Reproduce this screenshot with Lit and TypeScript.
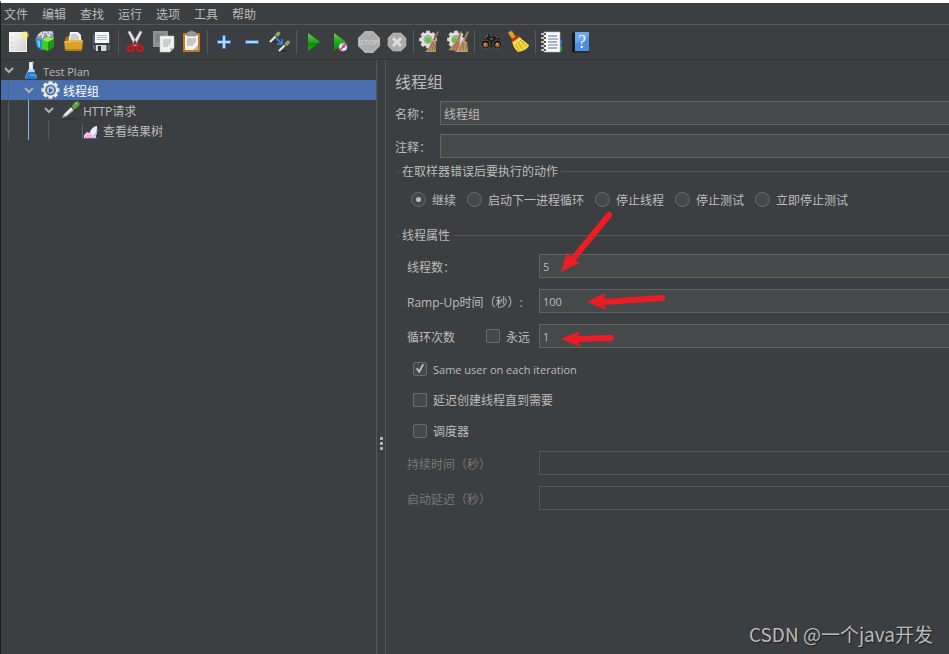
import { LitElement, html, css, svg, nothing, type TemplateResult } from "lit";
import { customElement, property } from "lit/decorators.js";
import { classMap } from "lit/directives/class-map.js";

const cog = (cx: number, cy: number, r: number) => {
  const n = 8;
  const pts: string[] = [];
  for (let i = 0; i < n; i++) {
    const a = (i / n) * Math.PI * 2 - Math.PI / 2;
    const at = (da: number, k: number) =>
      `${(cx + Math.cos(a + da) * r * k).toFixed(2)},${(cy + Math.sin(a + da) * r * k).toFixed(2)}`;
    pts.push(at(-0.26, 0.8), at(-0.2, 1), at(0.2, 1), at(0.26, 0.8));
  }
  return pts.join(" ");
};

const ICONS: Record<string, TemplateResult> = {
  new: svg`
    <defs><linearGradient id="g" x2="1" y2="1"><stop stop-color="#fdfdfd"/><stop offset="1" stop-color="#cfcfcf"/></linearGradient>
    <radialGradient id="s"><stop stop-color="#fffde0"/><stop offset=".4" stop-color="#f4ec70"/><stop offset="1" stop-color="#f4ec70" stop-opacity="0"/></radialGradient></defs>
    <rect x="3.5" y="2.5" width="17" height="19" fill="url(#g)" stroke="#f4f4f4"/>
    <path d="M6 7v1M6 12v1M6 17v1" stroke="#aaa"/>
    <circle cx="19" cy="5" r="4.500" fill="url(#s)"/>`,
  templates: svg`
    <path d="M2 8l3-5 5-2 9 0 1 8-8 4-9-2z" fill="#8d9aa0"/>
    <path d="M4 6l4-4M8 8l2-6 4 1M14 7l2-5 3 2M6 4l4 2M12 4l5 2" stroke="#dfe8ec" stroke-width="1.200" fill="none"/>
    <path d="M1 8l8 2v11l-6-4z" fill="#1d8fd8"/><path d="M3 10l3 1v7l-2-2z" fill="#7cc8f4"/>
    <path d="M8 10l6-3 6 2-6 3z" fill="#8cf04a"/><path d="M8 10l6 2v9l-6-2z" fill="#3fce1f"/><path d="M14 12l6-3v8l-6 4z" fill="#1c9a10"/>`,
  open: svg`
    <path d="M3 8l3-2h4l1 2h9v6H3z" fill="#a87310"/>
    <path d="M8 2h8l3 3v10H6z" fill="#f4f4f4"/><path d="M9 5h6M9 7h8M8 9h9" stroke="#a9a9a9"/>
    <path d="M2 11h5l2-1h12l-1 10-1 1H4l-1-1z" fill="#dba02a"/><path d="M3 12h5l2-1h10" stroke="#f5cf6c" fill="none"/><path d="M3 20h17" stroke="#8d5d08"/>`,
  save: svg`
    <path d="M4 3h16l1 1v17H4l-2-2V5z" fill="#596167" stroke="#2b2f32"/>
    <rect x="5" y="2" width="14" height="11" fill="#f5f7f8"/><path d="M7 5.500h10M7 7.500h10M7 9.500h10" stroke="#a9bccb"/>
    <path d="M3 13h18v2H3z" fill="#3b4146"/><rect x="6" y="15" width="11" height="6" fill="#d3d6d7"/><rect x="8" y="16" width="3" height="5" fill="#2b2f32"/><path d="M17 15v6" stroke="#24282b"/>`,
  cut: svg`
    <path d="M5 2l2-1 8 14-3 1zM19 2l-2-1-8 14 3 1z" fill="#e6e9ea" stroke="#aeb4b6" stroke-width=".5"/>
    <ellipse cx="7.500" cy="18.500" rx="2.800" ry="2.500" fill="none" stroke="#d4151b" stroke-width="2.200"/>
    <ellipse cx="17" cy="18.500" rx="2.800" ry="2.500" fill="none" stroke="#d4151b" stroke-width="2.200"/>
    <path d="M9 16l3-3 4 3" stroke="#d4151b" stroke-width="2" fill="none"/>`,
  copy: svg`
    <path d="M2 1h15v16H2z" fill="#8d9090"/><path d="M5 5h8M5 7h8M5 9h4M5 11h4" stroke="#6d7070"/>
    <path d="M9 6h14v12l-4 4H9z" fill="#f1f2f0" stroke="#c4c6c3" stroke-width=".6"/>
    <path d="M12 10h8M12 12h8M12 14h7M12 16h5" stroke="#a6a8a6"/><path d="M23 18h-4v4z" fill="#b7b9b6"/>`,
  paste: svg`
    <rect x="4" y="3" width="17" height="19" rx="1" fill="#c67a1b"/><rect x="6" y="5" width="13" height="15" fill="#f3f3f1"/>
    <path d="M8 2h2l1-1h3l1 1h2v4H8z" fill="#9a9d9b" stroke="#6d706e" stroke-width=".5"/>
    <path d="M8 9h9M8 11h9M8 13h8M8 15h6" stroke="#9c9f9c"/><path d="M19 15l-5 5h5z" fill="#b8bab7"/>`,
  plus: svg`<path d="M10.500 5.500h3v5h5v3h-5v5h-3v-5h-5v-3h5z" fill="#b7d8fb" stroke="#3d78c4"/>`,
  minus: svg`<path d="M5.500 10.500h13v3h-13z" fill="#b7d8fb" stroke="#3d78c4"/>`,
  toggle: svg`
    <path d="M2 12h7M12 21h7" stroke="#202224"/>
    <path d="M2 12L8 6" stroke="#e6e9e6" stroke-width="2.200"/><path d="M8.500 5.500l2-2" stroke="#83ad66" stroke-width="3.600" stroke-linecap="round"/><path d="M6 4l4 4" stroke="#33402c"/>
    <path d="M11 21l6-6" stroke="#e6e9e6" stroke-width="2.200"/><path d="M18 14.500l2-2" stroke="#83ad66" stroke-width="3.600" stroke-linecap="round"/><path d="M15 13l4 4" stroke="#33402c"/>
    <path d="M8 8l5 5M14 9v5H9" stroke="#3f86e0" stroke-width="1.600" fill="none"/>`,
  run: svg`<defs><linearGradient id="r" x2="0" y2="1"><stop stop-color="#5bd04a"/><stop offset=".5" stop-color="#1fa81a"/><stop offset=".6" stop-color="#078a05"/><stop offset="1" stop-color="#22b51c"/></linearGradient></defs>
    <path d="M7 3l12 9L7 21z" fill="url(#r)"/>`,
  runNow: svg`<defs><linearGradient id="r" x2="0" y2="1"><stop stop-color="#5bd04a"/><stop offset=".5" stop-color="#1fa81a"/><stop offset="1" stop-color="#078a05"/></linearGradient></defs>
    <path d="M5 3l12 9L5 21z" fill="url(#r)"/><circle cx="14" cy="17" r="4" fill="#e8f0f8" stroke="#8fb4dc"/><path d="M14 14v3h2" stroke="#3273bd" fill="none"/><path d="M10 21l8-8" stroke="#e02020" stroke-width="1.400"/>`,
  stop: svg`<path d="M8 1h8l7 7v8l-7 7H8l-7-7V8z" fill="#adadad"/><path d="M8 2h8l6 6v8l-6 6H8l-6-6V8z" fill="none" stroke="#b9b9b9"/>
    <text x="12" y="15" text-anchor="middle" font-size="8" font-family="Liberation Sans, sans-serif" fill="#d2d2d2">STOP</text>`,
  shutdown: svg`<path d="M8 3h8l5 5v8l-5 5H8l-5-5V8z" fill="#acacac" stroke="#bdbdbd" stroke-width=".6"/><path d="M8 8l8 8M16 8l-8 8" stroke="#dcdcdc" stroke-width="3"/>`,
  clear: svg`
    <polygon points=${cog(10, 9.5, 9)} fill="#dedede"/><circle cx="10" cy="9.500" r="4.500" fill="#aab0aa"/><circle cx="10" cy="10" r="2.600" fill="#63c928"/>
    <path d="M19 1l2 1-4 9-2-1z" fill="#8f6b49"/><path d="M14 10l4 2 0 10H7c4-3 5-7 7-12z" fill="#bd9469"/><path d="M15 12l-4 9M16 13l-2 8M17 14l0 7" stroke="#80603f" stroke-width=".8"/>`,
  clearAll: svg`
    <polygon points=${cog(10, 9.5, 9)} fill="#dedede"/><circle cx="10" cy="9.500" r="4.500" fill="#aab0aa"/><circle cx="8" cy="10" r="2.500" fill="#63c928"/>
    <path d="M14 1l2 1-3 9-2-1zM21 1l2 1-4 9-2-1z" fill="#a07a54"/><path d="M10 9l4 2-1 10-11-1c4-3 6-6 8-11z" fill="#b58b60"/><path d="M16 10l5 2 1 10H9c4-3 5-7 7-12z" fill="#c49c70"/>
    <path d="M11 12l-4 8M13 12l-3 8M17 12l-3 9M18 13l-1 8M20 14v7" stroke="#80603f" stroke-width=".8"/>`,
  search: svg`
    <path d="M3 13l4-7 3-2 2 3h2l2-3 3 2 4 7v4H2z" fill="#202020"/><path d="M6 8l3-3M16 5l3 3M11 9h3" stroke="#888"/>
    <circle cx="6.500" cy="14.500" r="4.500" fill="#161616" stroke="#5a5a5a"/><circle cx="18.500" cy="14.500" r="4.500" fill="#161616" stroke="#5a5a5a"/>
    <circle cx="6.500" cy="15" r="2.500" fill="#a75a2c"/><circle cx="18.500" cy="15" r="2.500" fill="#a75a2c"/><circle cx="6" cy="14" r="1" fill="#e4a87a"/><circle cx="18" cy="14" r="1" fill="#e4a87a"/>`,
  reset: svg`
    <path d="M1 3l2-2h2l4 6-4 2z" fill="#e0a02c" stroke="#8a5a10" stroke-width=".6"/><path d="M5 11l6-5 11 9c0 3-5 6-11 7-4-3-5-7-6-11z" fill="#f2d63c"/>
    <path d="M9 14l3 7M11 12l5 8M13 10l6 6" stroke="#c8a51d"/><path d="M5 11l7-5" stroke="#cf2a1a" stroke-width="2.400"/><path d="M6 14l8-6" stroke="#fbf08a"/>`,
  log: svg`
    <path d="M19 10h3v5h-3z" fill="#2167d1"/><path d="M19 16h3v5h-3z" fill="#28a01c"/>
    <rect x="4" y="2" width="16" height="20" fill="#fbfbfb" stroke="#b9b9b9" stroke-width=".6"/><path d="M8 6h9M8 12h9M8 18h9" stroke="#3566b8"/><path d="M8 9h10M8 15h10" stroke="#777"/>
    <path d="M1 4h4M1 8h4M1 12h4M1 16h4M1 20h4" stroke="#e6e6e6" stroke-width="1.600"/><path d="M5 3v2M5 7v2M5 11v2M5 15v2M5 19v2" stroke="#222" stroke-width="1.500"/>`,
  help: svg`
    <path d="M4 3l3-1v20H4z" fill="#17191b"/><rect x="7" y="2" width="14" height="19" fill="#4b8ee2"/><path d="M7 2h14v4L7 14z" fill="#6ba6ee"/><path d="M5 22h16" stroke="#17191b"/>
    <text x="14" y="18" text-anchor="middle" font-size="18" font-family="Liberation Serif, serif" fill="#fff">?</text>`,
  flask: svg`
    <path d="M8 2h5l-1 1v6l4 8-1 2H5l-1-2 4-8V3z" fill="#dde6f0"/><path d="M7 12h7l2 5-1 2H5l-1-2z" fill="#1f7fe0"/><path d="M7 12h7l-1-3H8z" fill="#b9d6f3"/><path d="M9 15c2 1 4-1 6 1" stroke="#8cc4fb" fill="none"/><path d="M10 3v7" stroke="#fff"/><path d="M12 1v4" stroke="#8a98a8"/>`,
  gear: svg`
    <polygon points=${cog(9.5, 10, 9)} fill="#f0f0f0" stroke="#b9bcc0" stroke-width=".6"/><circle cx="9.500" cy="10" r="5.500" fill="#5d7290"/><circle cx="9.500" cy="10" r="3.800" fill="#a9c2e2"/><path d="M8 8l4 2-4 3z" fill="#2f62ab"/>`,
  dropper: svg`
    <path d="M2 19h14" stroke="#2b2d2e"/><path d="M1 18l2-4 7-7 3 3-7 6z" fill="#c9cdc9" stroke="#707570" stroke-width=".6"/><path d="M4 15l7-7" stroke="#fff" stroke-width="1.500"/><path d="M9 5l6 6" stroke="#2e3a28" stroke-width="1.500"/><path d="M13.500 6.500l2.500-2.500" stroke="#5da23a" stroke-width="5" stroke-linecap="round"/><path d="M14 4l2-1" stroke="#a6dc88"/>`,
  chart: svg`
    <path d="M1.500 4v14.500h15" stroke="#606468" fill="none"/><path d="M3 18v-3l3-3 3 1 3-3 3 3v5z" fill="#f3aee0"/><path d="M3 17l3-4 4 1" stroke="#fbdcf4" fill="none"/><path d="M9 12c1-3 4-6 7-6v8l-3 3z" fill="#e6f1fb"/><path d="M13 16l3-4V9" stroke="#6fa2d9" fill="none"/>`,
};

@customElement("jm-icon")
class JmIcon extends LitElement {
  @property() name = "";
  @property({ type: Number }) size = 24;
  static styles = css`
    :host { display: block; line-height: 0; }
  `;
  render() {
    return html`<svg width=${this.size} height=${this.size} viewBox="0 0 ${this.size} ${this.size}" fill="none" aria-hidden="true">${ICONS[this.name]}</svg>`;
  }
}

const MENUS = ["文件", "编辑", "查找", "运行", "选项", "工具", "帮助"];

const TOOLS = [
  ["new", "templates", "open", "save"],
  ["cut", "copy", "paste"],
  ["plus", "minus", "toggle"],
  ["run", "runNow", "stop", "shutdown"],
  ["clear", "clearAll"],
  ["search", "reset"],
  ["log", "help"],
];

interface Node { depth: number; icon: string; label: string; leaf?: boolean; selected?: boolean; latin?: boolean }
const TREE: Node[] = [
  { depth: 0, icon: "flask", label: "Test Plan", latin: true },
  { depth: 1, icon: "gear", label: "线程组", selected: true },
  { depth: 2, icon: "dropper", label: "HTTP请求" },
  { depth: 3, icon: "chart", label: "查看结果树", leaf: true },
];

const ACTIONS = ["继续", "启动下一进程循环", "停止线程", "停止测试", "立即停止测试"];

@customElement("app-root")
class AppRoot extends LitElement {
  static styles = css`
    :host {
      display: flex;
      flex-direction: column;
      position: relative;
      min-height: 100vh;
      box-sizing: border-box;
      overflow: hidden;
      border-top: 3px solid #fff;
      border-left: 1px solid #1e1f20;
      background: #3c3f41;
      color: #bbb;
      font: 12px/16px "Open Sans", "Noto Sans CJK SC", sans-serif;
    }
    * { box-sizing: border-box; }
    button, input { font: inherit; color: inherit; }
    button { background: none; border: 0; padding: 0; }
    .menubar {
      display: flex;
      gap: 14px;
      height: 22px;
      align-items: center;
      padding: 2px 0 0 3px;
      border-bottom: 1px solid #555758;
    }
    .toolbar {
      display: flex;
      align-items: center;
      height: 35px;
      padding-left: 3px;
      border-bottom: 1px solid #323435;
    }
    .group { display: flex; }
    .group + .group::before {
      content: "";
      width: 1px;
      height: 24px;
      margin: 0 2px;
      background: #555758;
    }
    .tool { width: 28px; height: 24px; display: grid; place-items: center; }
    .main { flex: 1; display: flex; }
    .tree { width: 40%; max-width: 375px; margin: 0; padding: 0; list-style: none; }
    .node { display: flex; align-items: center; height: 20px; padding-right: 4px; }
    .node.selected { background: #4b6eaf; color: #fff; }
    .guide { width: 20px; height: 20px; flex: none; padding-left: 7px; }
    .guide::before { content: ""; display: block; width: 1px; height: 100%; background: #55585a; }
    .guide.active::before { background: #78b9f5; }
    .selected .guide::before { background: #4a6393; }
    .twisty { width: 20px; flex: none; padding-left: 3px; line-height: 0; }
    .label { padding: 3px 0 0 2px; }
    .latin { font-size: 11px; }
    .splitter {
      width: 10px;
      flex: none;
      border: solid #555758;
      border-width: 0 1px;
      display: flex;
      flex-direction: column;
      align-items: center;
      justify-content: center;
      gap: 2px;
      padding-top: 172px;
    }
    .dot { width: 3px; height: 3px; border-radius: 1px; background: #bbb; }
    .editor { flex: 1; min-width: 0; padding-top: 10px; position: relative; }
    .title { margin: 0 0 7px 9px; font-size: 16px; line-height: 24px; font-weight: 400; }
    .row { display: flex; align-items: center; padding-left: 9px; margin-bottom: 9px; }
    .row.last { margin-bottom: 4px; }
    .caption { width: 45px; flex: none; padding-top: 3px; }
    .field {
      flex: 1;
      min-width: 0;
      height: 24px;
      padding: 1px 3px 0;
      border: 1px solid #646464;
      border-right: 0;
      border-radius: 0;
      background: #45494a;
      outline: 0;
    }
    .prop .field { font-size: 11px; }
    .field:disabled { background: transparent; border-color: #55585a; }
    .set { border: 0; border-top: 1px solid #55585a; margin: 0 0 0 12px; padding: 0; min-width: 0; }
    .legend { padding: 2px 3px 0 2px; margin-left: 2px; }
    .radios { display: flex; gap: 11px; padding: 11px 0 18px 13px; }
    .option { display: flex; align-items: center; gap: 6px; white-space: nowrap; }
    .option span { padding-top: 2px; margin-bottom: -1px; }
    .radio, .check {
      appearance: none;
      flex: none;
      margin: 0;
      border: 1px solid #6b6b6b;
      background: #43494a;
      display: grid;
      place-items: center;
    }
    .radio { width: 15px; height: 15px; border-radius: 50%; }
    .radio:checked::before { content: ""; width: 5px; height: 5px; border-radius: 50%; background: #bbb; }
    .check { width: 14px; height: 14px; border-radius: 2px; }
    .check:checked::before {
      content: "";
      width: 8px;
      height: 10px;
      background: #bbb;
      clip-path: polygon(0 55%, 18% 40%, 38% 65%, 82% 0, 100% 12%, 42% 100%);
    }
    .prop { display: grid; grid-template-columns: 132px 1fr; align-items: center; padding-left: 9px; margin-bottom: 11px; }
    .prop.first { margin-top: 10px; }
    .name { padding-top: 3px; }
    .split { display: flex; align-items: center; justify-content: space-between; padding-right: 9px; }
    .flags { display: grid; gap: 14px; padding: 1px 0 12px 15px; }
    .off { color: #777; }
    .marks { position: absolute; left: 0; top: 0; pointer-events: none; }
    .mark { position: absolute; right: 16px; bottom: 8px; font: 19px/24px "Noto Sans CJK SC", sans-serif; color: #b9babb; text-shadow: 1px 1px 1px #1c1d1e; }
  `;

  private node(n: Node) {
    return html`<li class=${classMap({ node: true, selected: !!n.selected })} role="treeitem" aria-level=${n.depth + 1}>
      ${Array.from({ length: n.depth }, (_, i) => html`<span class=${classMap({ guide: true, active: i === 1 })}></span>`)}
      <span class="twisty">${n.leaf ? nothing : html`<svg width="10" height="10" viewBox="0 0 10 10"><path d="M1 3l4 4 4-4" fill="none" stroke="#adb0b2" stroke-width="2"/></svg>`}</span>
      <jm-icon name=${n.icon} size="20"></jm-icon>
      <span class=${classMap({ label: true, latin: !!n.latin })}>${n.label}</span>
    </li>`;
  }

  private prop(id: string, label: string, value: string, cls = "", disabled = false) {
    return html`<div class="prop ${cls}">
      <label class="name" for=${id}>${label}</label>
      <input class="field" id=${id} .value=${value} ?disabled=${disabled} />
    </div>`;
  }

  render() {
    return html`
      <nav class="menubar">${MENUS.map((m) => html`<button>${m}</button>`)}</nav>
      <div class="toolbar" role="toolbar">
        ${TOOLS.map((g) => html`<div class="group">${g.map((t) => html`<button class="tool" aria-label=${t}><jm-icon name=${t}></jm-icon></button>`)}</div>`)}
      </div>
      <div class="main">
        <ul class="tree" role="tree">${TREE.map((n) => this.node(n))}</ul>
        <div class="splitter"><span class="dot"></span><span class="dot"></span><span class="dot"></span></div>
        <main class="editor">
          <h1 class="title">线程组</h1>
          <div class="row"><label class="caption" for="name">名称：</label><input class="field" id="name" .value=${"线程组"} /></div>
          <div class="row last"><label class="caption" for="note">注释：</label><input class="field" id="note" /></div>
          <fieldset class="set">
            <legend class="legend">在取样器错误后要执行的动作</legend>
            <div class="radios">
              ${ACTIONS.map((a, i) => html`<label class="option"><input class="radio" type="radio" name="action" ?checked=${i === 0} /><span>${a}</span></label>`)}
            </div>
          </fieldset>
          <fieldset class="set">
            <legend class="legend">线程属性</legend>
            ${this.prop("threads", "线程数：", "5", "first")}
            ${this.prop("ramp", "Ramp-Up时间（秒）:", "100")}
            <div class="prop">
              <div class="split">
                <label class="name" for="loops">循环次数</label>
                <label class="option"><input class="check" type="checkbox" /><span>永远</span></label>
              </div>
              <input class="field" id="loops" .value=${"1"} />
            </div>
            <div class="flags">
              <label class="option"><input class="check" type="checkbox" checked /><span class="latin">Same user on each iteration</span></label>
              <label class="option"><input class="check" type="checkbox" /><span>延迟创建线程直到需要</span></label>
              <label class="option"><input class="check" type="checkbox" /><span>调度器</span></label>
            </div>
            ${this.prop("duration", "持续时间（秒）", "", "off", true)}
            ${this.prop("delay", "启动延迟（秒）", "", "off", true)}
          </fieldset>
          <svg class="marks" width="300" height="300" viewBox="386 60 300 300" fill="#ed1c24" stroke="#ed1c24" aria-hidden="true">
            <path d="M609 215L573 259M662 298L604 302M611 338L578 339" stroke-width="6" stroke-linecap="round"/>
            <path d="M561 272l6-20 4 6 5 4 5 0zM587 302l18-9-1 6v6l3 5zM561 339l19-8-2 5v6l3 5z" stroke="none"/>
          </svg>
        </main>
      </div>
      <div class="mark">CSDN @一个java开发</div>
    `;
  }
}
